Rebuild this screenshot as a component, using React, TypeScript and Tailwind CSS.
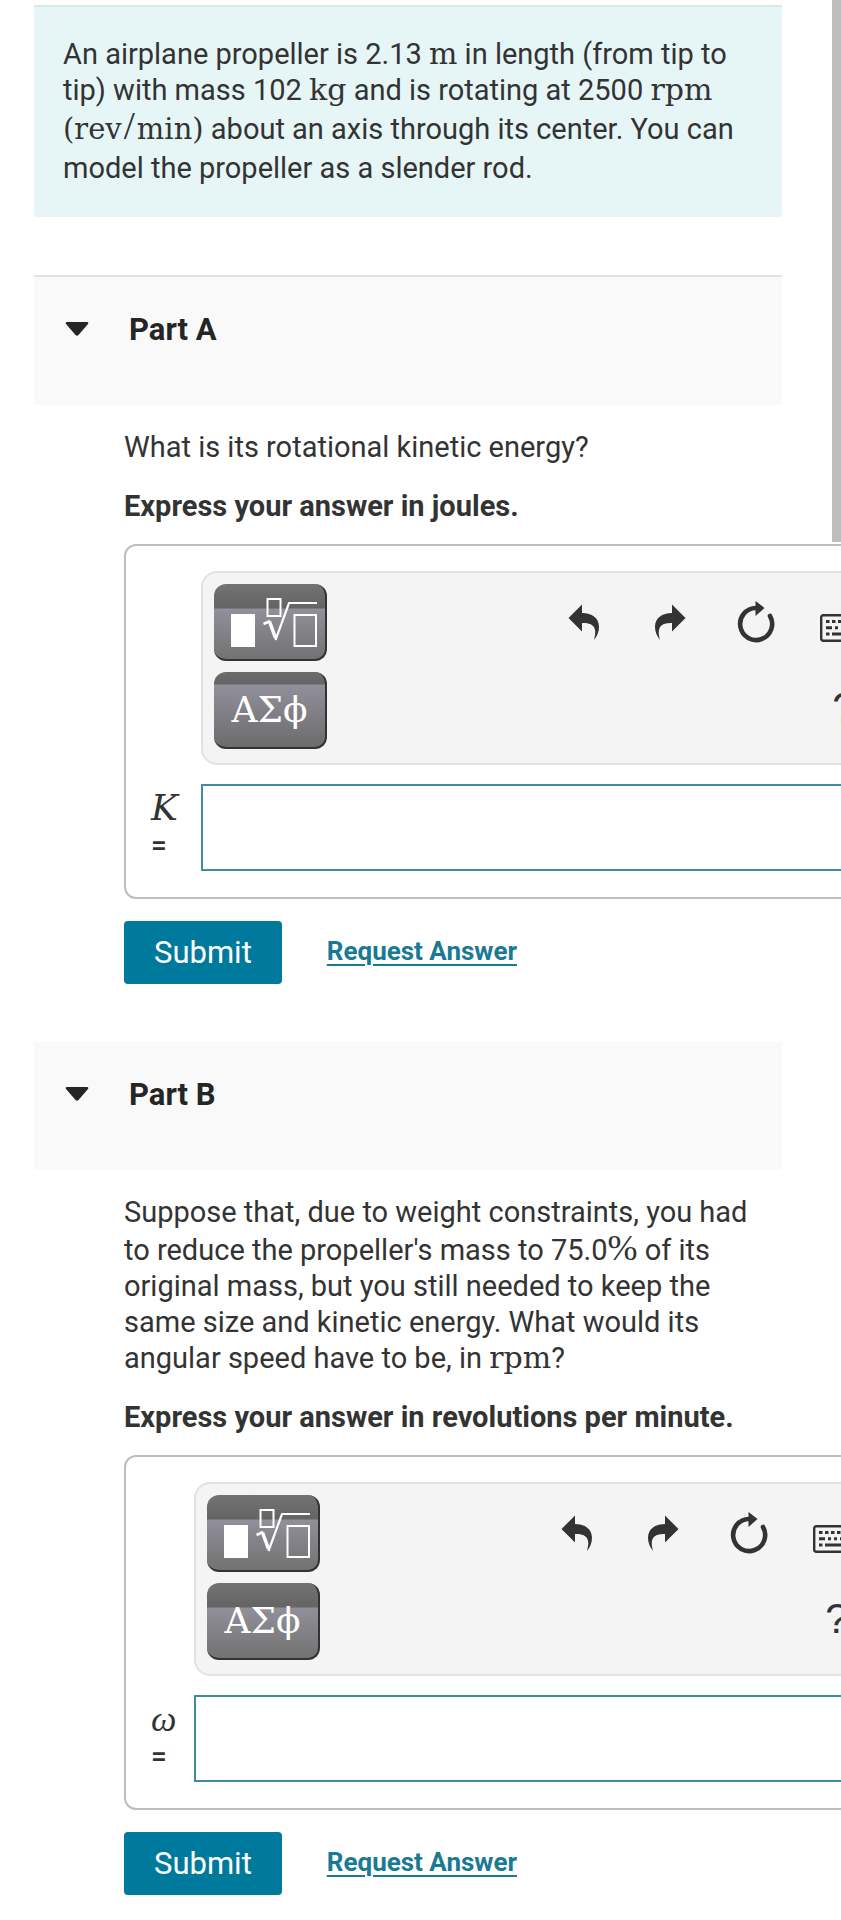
import type { ReactNode } from "react";

function MathText({ children }: { children: ReactNode }) {
  return (
    <span className="font-['DejaVu_Serif',serif] text-[30px] leading-8">
      {children}
    </span>
  );
}

function UndoIcon({ className = "" }: { className?: string }) {
  return (
    <svg viewBox="0 0 32 36" className={`h-9 w-8 ${className}`} fill="#333" aria-hidden="true">
      <path d="M0.500 14 L14 0.500 V9 C24 9 31 14 31 23 C31 28 29 32 26 36 C27.500 30 28 26 25.500 22.500 C23 19.500 19 19 14 19 V27.500 Z" />
    </svg>
  );
}

function ResetIcon() {
  return (
    <svg viewBox="0 0 38 44" className="h-11 w-[38px]" aria-hidden="true">
      <path
        d="M33 16 A16 16 0 1 1 19 8"
        fill="none"
        stroke="#333"
        strokeWidth="4.600"
        strokeLinecap="round"
      />
      <path d="M18.500 1 L27.500 8 L18.500 16 Z" fill="#333" />
    </svg>
  );
}

function KeyboardIcon() {
  return (
    <svg viewBox="0 0 44 28" className="h-7 w-11" fill="#333" aria-hidden="true">
      <rect x="1.200" y="1.200" width="41.600" height="25.600" rx="2" fill="none" stroke="#333" strokeWidth="2.400" />
      <path d="M6 6h3.500v3H6z M12 6h3.500v3H12z M18 6h3.500v3H18z M24 6h3.500v3H24z M30 6h3.500v3H30z M35.500 6h3v3h-3z M6 12.200h6v3H6z M15 12.200h3v3h-3z M21 12.200h3v3h-3z M27 12.200h3v3h-3z M33 12.200h5.500v3H33z M6 18.400h3.500v3H6z M12 18.400h20v3H12z M35 18.400h3.500v3H35z" />
    </svg>
  );
}

function TemplateIcon() {
  return (
    <svg viewBox="0 0 111 75" className="h-[75px] w-[111px]" fill="none" stroke="#fff" strokeWidth="2" aria-hidden="true">
      <rect x="17" y="30" width="24" height="33" fill="#fff" stroke="none" />
      <rect x="53.500" y="15" width="13" height="17" />
      <path d="M49.500 40 L56 37" strokeWidth="2.500" />
      <path d="M55.500 37.500 L61.500 54" strokeWidth="3.500" />
      <path d="M61.500 56 L75 19 H103" strokeWidth="2.200" />
      <rect x="80.500" y="31" width="21.500" height="31" />
    </svg>
  );
}

const paletteButton =
  "flex h-[77px] w-[113px] cursor-pointer items-center justify-center rounded-xl border-b-2 border-r-2 border-[#333] text-white";

function Toolbar({ shortBand }: { shortBand: boolean }) {
  const tall =
    "bg-[linear-gradient(to_bottom,#737373_0px,#646464_24px,#918f9a_25px,#727272_100%)]";
  const short =
    "bg-[linear-gradient(to_bottom,#6c6c6c_0px,#646464_12px,#918f9a_13px,#6c6c6c_100%)]";
  return (
    <div className="flex h-[194px] w-[697px] items-start justify-between rounded-2xl border-2 border-[#e2e2e2] bg-[#f4f4f4] px-[11px] pt-[11px]">
      <div className="flex flex-col gap-[11px]">
        <button type="button" aria-label="Math templates" className={`${paletteButton} ${tall}`}>
          <TemplateIcon />
        </button>
        <button
          type="button"
          aria-label="Greek symbols"
          className={`${paletteButton} ${shortBand ? short : tall} font-['DejaVu_Serif',serif] text-[36px] leading-none`}
        >
          ΑΣϕ
        </button>
      </div>
      <div className="grid grid-cols-4 text-[#333]">
        <button type="button" aria-label="Undo" className="flex h-[76px] w-[86px] items-center justify-center">
          <UndoIcon />
        </button>
        <button type="button" aria-label="Redo" className="flex h-[76px] w-[86px] items-center justify-center">
          <UndoIcon className="-scale-x-100" />
        </button>
        <button type="button" aria-label="Reset" className="flex h-[76px] w-[86px] items-center justify-center">
          <ResetIcon />
        </button>
        <button type="button" aria-label="Keyboard shortcuts" className="flex h-[76px] w-[86px] items-center justify-center pt-3">
          <KeyboardIcon />
        </button>
        <button
          type="button"
          aria-label="Help"
          className="col-start-4 flex h-24 w-[86px] items-center justify-center pl-1 font-['Liberation_Sans',sans-serif] text-[42px] leading-none"
        >
          ?
        </button>
      </div>
    </div>
  );
}

interface PartProps {
  id: string;
  title: string;
  question: ReactNode;
  instruction: string;
  symbol: string;
  symbolClass: string;
  labelClass: string;
  headerClass: string;
  shortBand: boolean;
}

function Part({
  id,
  title,
  question,
  instruction,
  symbol,
  symbolClass,
  labelClass,
  headerClass,
  shortBand,
}: PartProps) {
  return (
    <section className="mt-[58px]">
      <h2 className={`mr-[59px] bg-[#f9f9f9] ${headerClass}`}>
        <button
          type="button"
          aria-expanded="true"
          className="flex h-32 w-full items-start pl-[31px] pt-[35px] text-left text-[31px] font-bold leading-9 text-[#252525]"
        >
          <svg viewBox="0 0 24 14" className="mr-10 mt-[10px] h-3.5 w-6" fill="#252525" aria-hidden="true">
            <path d="M2 0 H22 Q24 0 23 2 L13.500 13 Q12 14.500 10.500 13 L1 2 Q0 0 2 0 Z" />
          </svg>
          {title}
        </button>
      </h2>
      <div className="pl-[90px]">
        <p className="mr-20 mt-6">{question}</p>
        <p className="mr-20 mt-[23px] font-bold">{instruction}</p>
        <div className="mt-5 w-max rounded-xl border-2 border-[#bdbdbd] bg-white px-6 pb-[26px] pt-[25px]">
          <div className="flex">
            <div className={`flex-none ${labelClass}`} />
            <Toolbar shortBand={shortBand} />
          </div>
          <div className="mt-[19px] flex items-center">
            <label htmlFor={id} className={`flex flex-none flex-col pl-px ${labelClass}`}>
              <span className={`text-[36px] italic ${symbolClass}`}>{symbol}</span>
              <span className="text-[28px] font-medium leading-10">=</span>
            </label>
            <input
              id={id}
              type="text"
              className="h-[87px] w-[697px] border-2 border-[#3f8ba0] bg-white px-4 text-[30px] outline-none"
            />
          </div>
        </div>
        <div className="mt-[22px] flex items-center gap-[45px]">
          <button type="button" className="h-[63px] rounded bg-[#007a9c] px-[30px] text-[31px] text-white">
            Submit
          </button>
          <a href="#request-answer" className="pb-1 text-[26px] font-bold text-[#1a7a94] underline decoration-2 underline-offset-4">
            Request Answer
          </a>
        </div>
      </div>
    </section>
  );
}

export default function App() {
  return (
    <div className="relative min-h-screen overflow-hidden bg-white font-[Roboto,sans-serif] text-[29px] leading-9 text-[#333]">
      <main className="pb-5 pl-[34px] pt-[5px]">
        <p className="mr-[59px] border-t-2 border-[#dbe7e6] bg-[#e6f6f7] pb-[31px] pl-[29px] pr-6 pt-[29px]">
          An airplane propeller is 2.13 <MathText>m</MathText> in length (from tip to tip) with mass 102{" "}
          <MathText>kg</MathText> and is rotating at 2500 <MathText>rpm</MathText>{" "}
          <span className="whitespace-nowrap font-['DejaVu_Serif',serif] text-[29px] leading-[42px]">
            (rev<span className="mx-0.5 font-['Liberation_Serif',serif] text-[40px] leading-9">/</span>min)
          </span>{" "}
          about an axis through its center. You can model the propeller as a slender rod.
        </p>
        <Part
          id="answer-a"
          title="Part A"
          question="What is its rotational kinetic energy?"
          instruction="Express your answer in joules."
          symbol="K"
          symbolClass="font-['DejaVu_Serif',serif]"
          labelClass="w-[51px]"
          headerClass="border-t-2 border-[#e3e3e3]"
          shortBand
        />
        <Part
          id="answer-b"
          title="Part B"
          question={
            <>
              Suppose that, due to weight constraints, you had to reduce the propeller's mass to 75.0
              <span className="font-['Liberation_Serif',serif] text-[36px] leading-9">%</span> of its original
              mass, but you still needed to keep the same size and kinetic energy. What would its angular speed
              have to be, in <MathText>rpm</MathText>?
            </>
          }
          instruction="Express your answer in revolutions per minute."
          symbol="ω"
          symbolClass="font-['Liberation_Serif',serif]"
          labelClass="w-[44px]"
          headerClass=""
          shortBand={false}
        />
      </main>
      <div className="absolute right-0 top-0 h-[542px] w-[9px] bg-[#bdbdbd]" aria-hidden="true" />
    </div>
  );
}
